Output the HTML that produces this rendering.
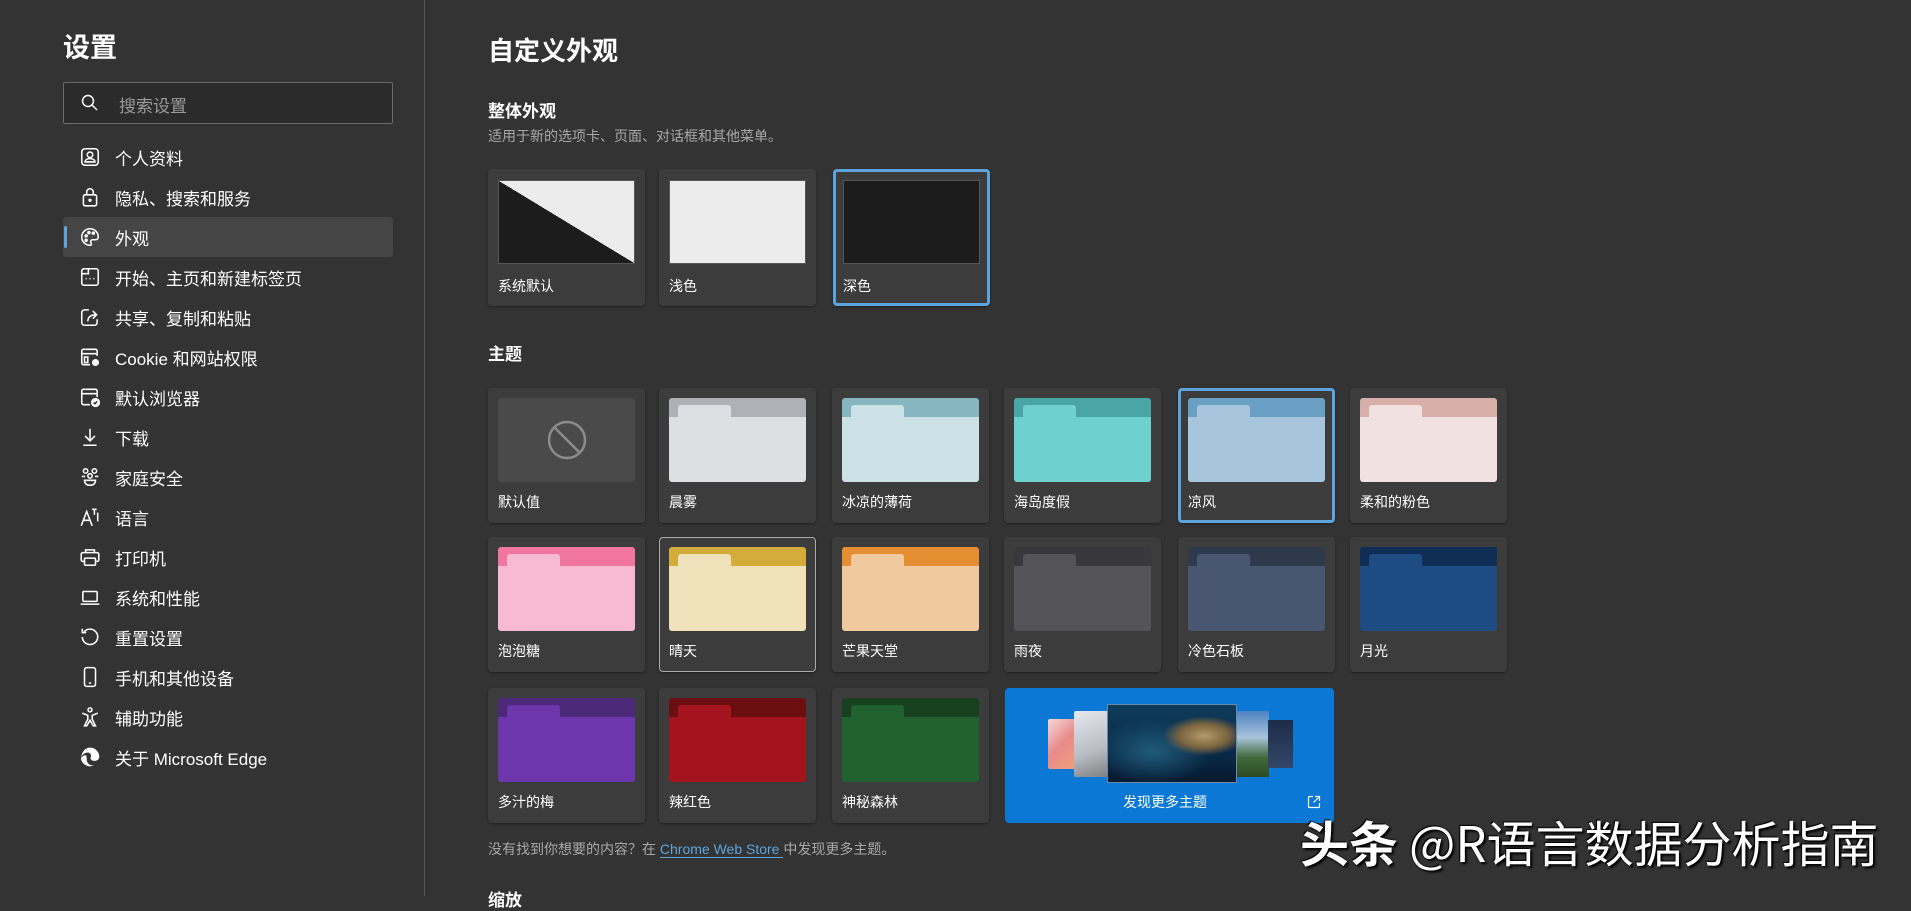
<!DOCTYPE html>
<html><head><meta charset="utf-8"><style>
*{margin:0;padding:0;box-sizing:border-box}
body{width:1911px;height:896px;background:#333;overflow:hidden;position:relative;font-family:"Liberation Sans","Noto Sans CJK SC",sans-serif;color:#fff}
.a{position:absolute}
.div{left:424px;top:0;width:1px;height:896px;background:#555}
.nav{position:absolute;left:63px;width:329px;height:40px;display:flex;align-items:center;font-size:17px;color:#fff}
.nav svg{position:absolute;left:16px;top:9px;width:22px;height:22px;fill:none;stroke:#fff;stroke-width:1.4}
.nav span{position:absolute;left:52px}
.card{position:absolute;width:157px;background:#3c3c3c;border-radius:4px;box-shadow:0 1px 2px rgba(0,0,0,.4)}
.card .lbl{position:absolute;left:10px;font-size:14px;color:#fff}
.sel{outline:3px solid #5ea4dc;outline-offset:-3px}
.th{height:135px}
.th .pv{position:absolute;left:10px;top:10px;width:137px;height:84px;border-radius:3px;overflow:hidden}
.th .strip{position:absolute;left:0;top:0;width:100%;height:19px}
.th .tab{position:absolute;left:9px;top:7px;width:53px;height:20px;border-radius:3px 3px 0 0}
.th .body{position:absolute;left:0;top:19px;width:100%;height:65px}
.th .lbl{top:104px}
</style></head><body>
<div class="a div"></div>
<div class="a" style="left:63px;top:26px;font-size:27px;font-weight:bold">设置</div>
<div class="a" style="left:63px;top:82px;width:330px;height:42px;border:1px solid #6a6a6a;background:#2b2b2b;border-radius:2px"></div>
<svg class="a" style="left:80px;top:93px" width="20" height="20" viewBox="0 0 20 20" fill="none" stroke="#fff" stroke-width="1.5"><circle cx="8" cy="8" r="5.5"/><path d="M12 12l5 5"/></svg>
<div class="a" style="left:119px;top:92px;font-size:17px;color:#9a9a9a">搜索设置</div>

<div class="a" style="left:63px;top:217px;width:330px;height:40px;background:#454545;border-radius:3px"></div>
<div class="a" style="left:64px;top:226px;width:3px;height:22px;background:#5ea4dc;border-radius:2px"></div>

<div class="nav" style="top:137px"><svg viewBox="0 0 20 20"><rect x="2.5" y="2.5" width="15" height="15" rx="3"/><circle cx="10" cy="8" r="2.5"/><path d="M5.5 14.5c0-2 2-3 4.5-3s4.5 1 4.5 3z"/></svg><span>个人资料</span></div>
<div class="nav" style="top:177px"><svg viewBox="0 0 20 20"><rect x="4" y="8" width="12" height="10" rx="1.5"/><path d="M7 8V5.5a3 3 0 016 0V8"/><circle cx="10" cy="13" r=".8" fill="#fff"/></svg><span>隐私、搜索和服务</span></div>
<div class="nav" style="top:217px"><svg viewBox="0 0 20 20"><path d="M10 2.5a7.5 7.5 0 100 15c1.5 0 1.5-1.5.8-2.5-.7-1 0-2.5 1.5-2.5H15a2.5 2.5 0 002.5-2.5C17.5 5.5 14 2.5 10 2.5z"/><circle cx="6.5" cy="9" r=".9"/><circle cx="9" cy="6" r=".9"/><circle cx="13" cy="6.5" r=".9"/><circle cx="6.5" cy="13" r=".9"/></svg><span>外观</span></div>
<div class="nav" style="top:257px"><svg viewBox="0 0 20 20"><rect x="2.5" y="2.5" width="15" height="15" rx="2"/><path d="M2.5 7h6v-4.5M6 11.5h1M9.5 11.5h1M13 11.5h1"/></svg><span>开始、主页和新建标签页</span></div>
<div class="nav" style="top:297px"><svg viewBox="0 0 20 20"><path d="M9 3.5H5a2.5 2.5 0 00-2.5 2.5v9A2.5 2.5 0 005 17.5h9a2.5 2.5 0 002.5-2.5v-3"/><path d="M8 14c0-4 3-6 7-6M12.5 4.5L16 8l-3.5 3.5"/></svg><span>共享、复制和粘贴</span></div>
<div class="nav" style="top:337px"><svg viewBox="0 0 20 20"><path d="M10 17H4a1.5 1.5 0 01-1.5-1.5v-11A1.5 1.5 0 014 3h11a1.5 1.5 0 011.5 1.5V9M2.5 7h14M5 10h3v5H5z"/><circle cx="15" cy="15" r="2.5" fill="#fff"/></svg><span>Cookie 和网站权限</span></div>
<div class="nav" style="top:377px"><svg viewBox="0 0 20 20"><path d="M10 17H4a1.5 1.5 0 01-1.5-1.5v-11A1.5 1.5 0 014 3h11a1.5 1.5 0 011.5 1.5V10M2.5 7h14"/><circle cx="15" cy="15" r="3.5" fill="#fff"/><path d="M13.3 15l1.2 1.2 2-2.2" stroke="#333"/></svg><span>默认浏览器</span></div>
<div class="nav" style="top:417px"><svg viewBox="0 0 20 20"><path d="M10 2.5v11M5.5 9l4.5 4.5L14.5 9M4 17.5h12"/></svg><span>下载</span></div>
<div class="nav" style="top:457px"><svg viewBox="0 0 20 20"><circle cx="6" cy="4.5" r="2"/><circle cx="14" cy="4.5" r="2"/><circle cx="10" cy="9" r="2"/><path d="M2.5 9.5h3M14.5 9.5h3M5 13c0 3 2 4.5 5 4.5s5-1.5 5-4.5z"/></svg><span>家庭安全</span></div>
<div class="nav" style="top:497px"><svg viewBox="0 0 20 20"><path d="M2 18L7 5l5 13M4 13h6M12 3h4M14 3v5M17 6v8"/></svg><span>语言</span></div>
<div class="nav" style="top:537px"><svg viewBox="0 0 20 20"><path d="M6 6V3.5h8V6M5 14H3.5A1.5 1.5 0 012 12.5v-5A1.5 1.5 0 013.5 6h13A1.5 1.5 0 0118 7.5v5a1.5 1.5 0 01-1.5 1.5H15"/><rect x="5" y="11" width="10" height="6.5" rx="1"/></svg><span>打印机</span></div>
<div class="nav" style="top:577px"><svg viewBox="0 0 20 20"><rect x="3.5" y="5" width="13" height="9" rx="1"/><path d="M1.5 16.5h17"/></svg><span>系统和性能</span></div>
<div class="nav" style="top:617px"><svg viewBox="0 0 20 20"><path d="M4.5 5.5A7 7 0 113 10M3 2.5v3.5h3.5"/></svg><span>重置设置</span></div>
<div class="nav" style="top:657px"><svg viewBox="0 0 20 20"><rect x="5" y="1.5" width="10" height="17" rx="2"/><path d="M9 15.5h2"/></svg><span>手机和其他设备</span></div>
<div class="nav" style="top:697px"><svg viewBox="0 0 20 20"><circle cx="10" cy="3.5" r="1.8"/><path d="M3 6.5l5 2v3.5l-3 6h2l3-5 3 5h2l-3-6V8.5l5-2"/></svg><span>辅助功能</span></div>
<div class="nav" style="top:737px"><svg viewBox="0 0 20 20" style="stroke:none;fill:#fff"><path d="M10 1.5a8.5 8.5 0 018.5 8c0 2.5-2 4-4.5 4-2 0-3.5-1-3.5-2.5 0-.8.5-1.3.5-2.3A3 3 0 007.5 6C4.5 6 2 8.5 2 12 2 5 6 1.5 10 1.5zM7 12c0 4 3.5 6.5 7 5.5a8.5 8.5 0 01-12.3-6C3 9 5 8 6.5 8.5 6.8 9.5 7 10.7 7 12z"/></svg><span>关于 Microsoft Edge</span></div>

<div class="a" style="left:488px;top:31px;font-size:26px;font-weight:bold">自定义外观</div>
<div class="a" style="left:488px;top:97px;font-size:17px;font-weight:bold">整体外观</div>
<div class="a" style="left:488px;top:126px;font-size:14px;color:#a8a8a8">适用于新的选项卡、页面、对话框和其他菜单。</div>

<div class="card" style="left:488px;top:169px;height:137px"><div class="a" style="left:10px;top:11px;width:137px;height:84px;border:1px solid #555;background:linear-gradient(to top right,#1c1c1c 50%,#ececec 50%)"></div><div class="lbl" style="top:107px">系统默认</div></div>
<div class="card" style="left:659px;top:169px;height:137px"><div class="a" style="left:10px;top:11px;width:137px;height:84px;border:1px solid #555;background:#ececec"></div><div class="lbl" style="top:107px">浅色</div></div>
<div class="card sel" style="left:833px;top:169px;height:137px"><div class="a" style="left:10px;top:11px;width:137px;height:84px;border:1px solid #555;background:#1c1c1c"></div><div class="lbl" style="top:107px">深色</div></div>

<div class="a" style="left:488px;top:340px;font-size:17px;font-weight:bold">主题</div>

<div class="card th" style="left:488px;top:388px"><div class="pv" style="background:#4a4a4a"><svg class="a" style="left:48px;top:21px" width="42" height="42" viewBox="0 0 42 42" fill="none" stroke="#8c8c8c" stroke-width="2.5"><circle cx="21" cy="21" r="18"/><path d="M8 8l26 26"/></svg></div><div class="lbl">默认值</div></div>

<div class="card th" style="left:659px;top:388px"><div class="pv"><div class="strip" style="background:#aeb1b7"></div><div class="body" style="background:#dedfe2"></div><div class="tab" style="background:#dedfe2"></div></div><div class="lbl">晨雾</div></div>
<div class="card th" style="left:832px;top:388px"><div class="pv"><div class="strip" style="background:#86b6c0"></div><div class="body" style="background:#cce1e6"></div><div class="tab" style="background:#cce1e6"></div></div><div class="lbl">冰凉的薄荷</div></div>
<div class="card th" style="left:1004px;top:388px"><div class="pv"><div class="strip" style="background:#4aa6a6"></div><div class="body" style="background:#6fd0d0"></div><div class="tab" style="background:#6fd0d0"></div></div><div class="lbl">海岛度假</div></div>
<div class="card th sel" style="left:1178px;top:388px"><div class="pv"><div class="strip" style="background:#6a9fc4"></div><div class="body" style="background:#a7c6de"></div><div class="tab" style="background:#a7c6de"></div></div><div class="lbl">凉风</div></div>
<div class="card th" style="left:1350px;top:388px"><div class="pv"><div class="strip" style="background:#d7aea8"></div><div class="body" style="background:#f1e2e1"></div><div class="tab" style="background:#f1e2e1"></div></div><div class="lbl">柔和的粉色</div></div>

<div class="card th" style="left:488px;top:537px"><div class="pv"><div class="strip" style="background:#f076a0"></div><div class="body" style="background:#f8bad1"></div><div class="tab" style="background:#f8bad1"></div></div><div class="lbl">泡泡糖</div></div>
<div class="card th" style="left:659px;top:537px;border:1px solid #aaa"><div class="pv" style="left:9px;top:9px"><div class="strip" style="background:#d4ac39"></div><div class="body" style="background:#efe2bb"></div><div class="tab" style="background:#efe2bb"></div></div><div class="lbl" style="left:9px;top:103px">晴天</div></div>
<div class="card th" style="left:832px;top:537px"><div class="pv"><div class="strip" style="background:#e68f32"></div><div class="body" style="background:#f0c99f"></div><div class="tab" style="background:#f0c99f"></div></div><div class="lbl">芒果天堂</div></div>
<div class="card th" style="left:1004px;top:537px"><div class="pv"><div class="strip" style="background:#38383c"></div><div class="body" style="background:#545458"></div><div class="tab" style="background:#545458"></div></div><div class="lbl">雨夜</div></div>
<div class="card th" style="left:1178px;top:537px"><div class="pv"><div class="strip" style="background:#2e3a4c"></div><div class="body" style="background:#485670"></div><div class="tab" style="background:#485670"></div></div><div class="lbl">冷色石板</div></div>
<div class="card th" style="left:1350px;top:537px"><div class="pv"><div class="strip" style="background:#0f2d55"></div><div class="body" style="background:#1e4b82"></div><div class="tab" style="background:#1e4b82"></div></div><div class="lbl">月光</div></div>

<div class="card th" style="left:488px;top:688px"><div class="pv"><div class="strip" style="background:#4b2878"></div><div class="body" style="background:#6d36ad"></div><div class="tab" style="background:#6d36ad"></div></div><div class="lbl">多汁的梅</div></div>
<div class="card th" style="left:659px;top:688px"><div class="pv"><div class="strip" style="background:#6a0e12"></div><div class="body" style="background:#a4141e"></div><div class="tab" style="background:#a4141e"></div></div><div class="lbl">辣红色</div></div>
<div class="card th" style="left:832px;top:688px"><div class="pv"><div class="strip" style="background:#17401f"></div><div class="body" style="background:#21602f"></div><div class="tab" style="background:#21602f"></div></div><div class="lbl">神秘森林</div></div>

<div class="a" style="left:1005px;top:688px;width:329px;height:135px;background:#0a78d4;border-radius:4px;overflow:hidden">
<div class="a" style="left:43px;top:31px;width:28px;height:50px;background:linear-gradient(135deg,#f4d7d6,#e88b8b 50%,#f0a07a);border-radius:2px"></div>
<div class="a" style="left:69px;top:23px;width:36px;height:66px;background:linear-gradient(160deg,#e5e8ee,#b9bcc2 60%,#7c7e80);border-radius:2px"></div>
<div class="a" style="left:230px;top:23px;width:34px;height:66px;background:linear-gradient(180deg,#4d82c0,#a9c3dc 40%,#3f6a3a 70%,#2e4a26)"></div>
<div class="a" style="left:263px;top:32px;width:25px;height:48px;background:linear-gradient(180deg,#1d2c48,#33476a)"></div>
<div class="a" style="left:102px;top:16px;width:130px;height:79px;border:1px solid #6a8aa8;background:radial-gradient(ellipse at 75% 40%,#b59a6a 0,#7a6440 18%,transparent 30%),radial-gradient(ellipse at 35% 60%,#1f5a7a,transparent 50%),linear-gradient(180deg,#0e3c5a,#0a2a48 60%,#061a30)"></div>
<div class="a" style="left:0;top:104px;width:320px;text-align:center;font-size:14px">发现更多主题</div>
<svg class="a" style="left:302px;top:107px" width="14" height="14" viewBox="0 0 14 14" fill="none" stroke="#fff" stroke-width="1.2"><path d="M6 1.5H2.5a1 1 0 00-1 1v9a1 1 0 001 1h9a1 1 0 001-1V8M8 1.5h4.5V6M12.5 1.5L6.5 7.5"/></svg>
</div>

<div class="a" style="left:488px;top:839px;font-size:14px;color:#a8a8a8">没有找到你想要的内容？在 <span style="color:#5ea4dc;border-bottom:1px solid #5ea4dc">Chrome Web Store </span>中发现更多主题。</div>
<div class="a" style="left:488px;top:886px;font-size:17px;font-weight:bold">缩放</div>

<div class="a" style="left:1300px;top:806px;font-size:49px;color:#fff;text-shadow:2px 2px 2px #000,-1px -1px 1px #000;white-space:nowrap;font-family:'Noto Sans CJK SC','Liberation Sans',sans-serif"><b>头条</b> @R语言数据分析指南</div>
</body></html>
